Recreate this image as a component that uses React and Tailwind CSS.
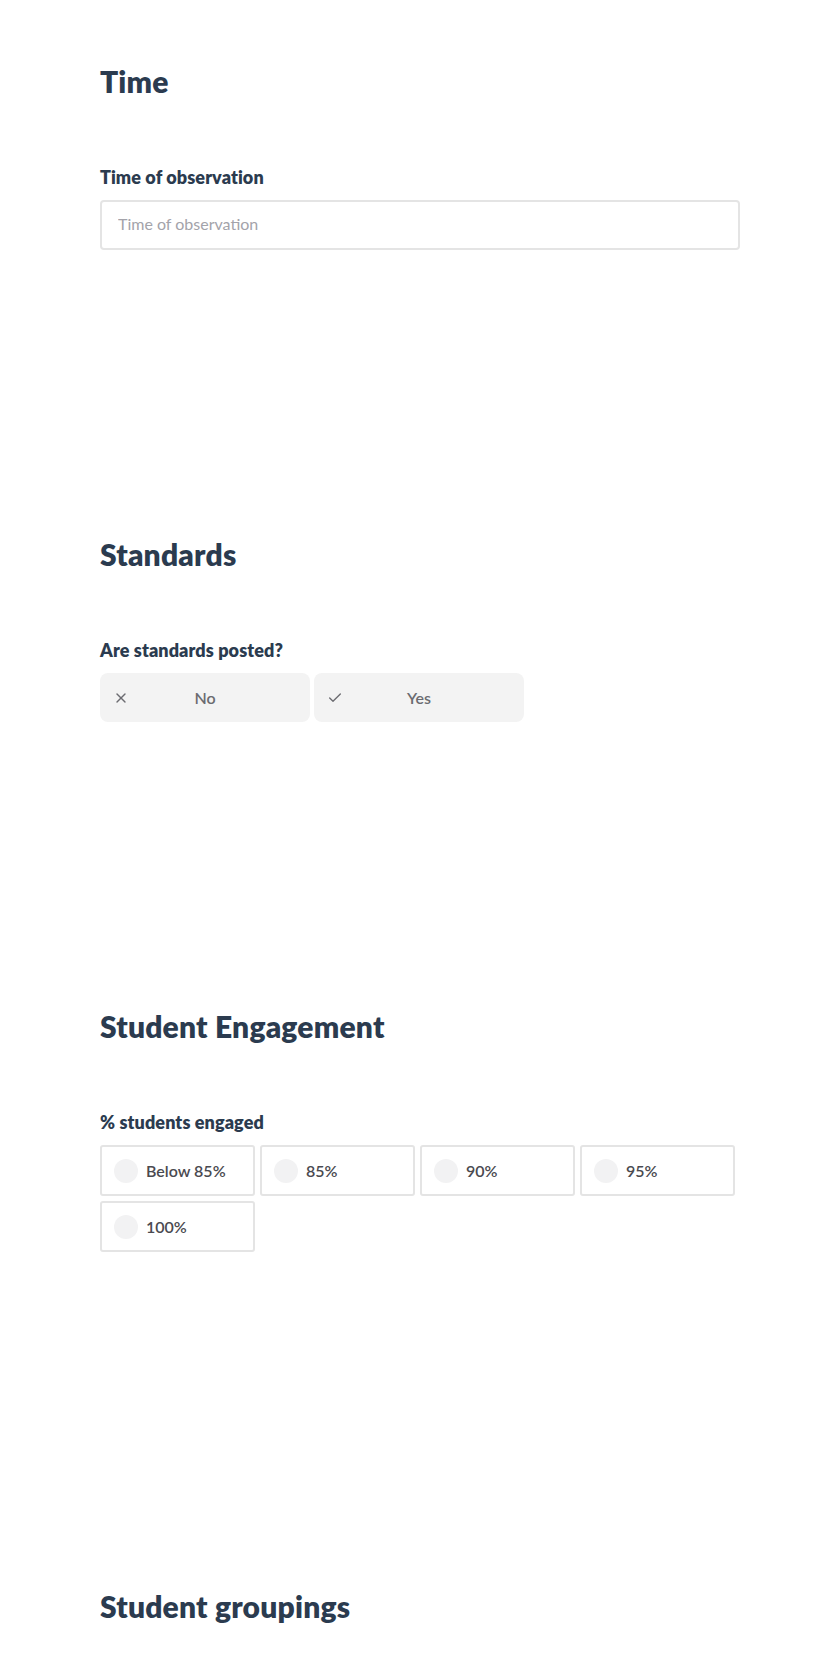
import { X, Check } from 'lucide-react'

const heading = 'text-[30px] leading-[36px] font-extrabold tracking-[0.2px] text-[#2b3b4f]'
const label = 'text-[18px] leading-[24px] font-extrabold tracking-[0.1px] text-[#2b3b4f] mb-[11px]'

function Toggle({ icon, text }) {
  return (
    <button type="button" className="w-[210px] h-[49px] rounded-[8px] bg-[#f3f3f3] grid grid-cols-[29px_1fr_29px] items-center text-[16px] font-semibold text-[#6b6b70]">
      <span className="flex justify-end">{icon}</span>
      <span className="text-center">{text}</span>
      <span />
    </button>
  )
}

function Radio({ text }) {
  return (
    <label className="w-[155px] h-[51px] border-2 border-[#e4e4e4] rounded-[3px] flex items-center pl-3 gap-2 text-[16px] font-semibold text-[#4a4a50]">
      <span className="w-6 h-6 rounded-full bg-[#f2f2f3] shrink-0" />
      <span>{text}</span>
    </label>
  )
}

export default function App() {
  return (
    <div className="min-h-screen bg-white" style={{ fontFamily: 'Lato, "Open Sans", sans-serif' }}>
      <div className="max-w-[640px] mx-auto pt-[63px]">
        <section className="pb-[286px]">
          <h2 className={heading}>Time</h2>
          <div className="mt-[66px]">
            <div className={label}>Time of observation</div>
            <input
              type="text"
              placeholder="Time of observation"
              className="w-full h-[50px] border-2 border-[#e4e4e4] rounded-[4px] px-[16px] pb-1 text-[16px] text-[#333] placeholder:text-[#a3a3aa] outline-none"
            />
          </div>
        </section>

        <section className="pb-[286px]">
          <h2 className={heading}>Standards</h2>
          <div className="mt-[66px]">
            <div className={label}>Are standards posted?</div>
            <div className="flex gap-1">
              <Toggle icon={<X size={16} strokeWidth={2} />} text="No" />
              <Toggle icon={<Check size={16} strokeWidth={2} />} text="Yes" />
            </div>
          </div>
        </section>

        <section className="pb-[336px]">
          <h2 className={heading}>Student Engagement</h2>
          <div className="mt-[66px]">
            <div className={label}>% students engaged</div>
            <div className="flex flex-wrap gap-[5px]">
              {['Below 85%', '85%', '90%', '95%', '100%'].map((t) => (
                <Radio key={t} text={t} />
              ))}
            </div>
          </div>
        </section>

        <section className="pb-[120px]">
          <h2 className={heading}>Student groupings</h2>
        </section>
      </div>
    </div>
  )
}
